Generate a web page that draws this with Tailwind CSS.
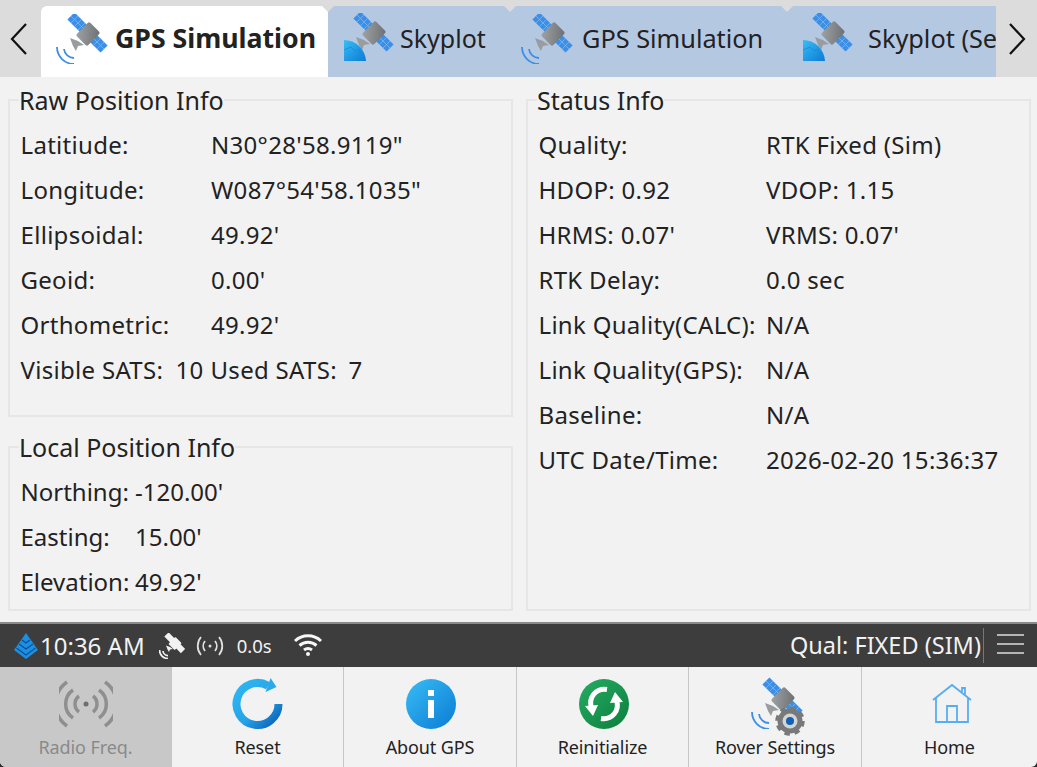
<!DOCTYPE html>
<html lang="en">
<head>
<meta charset="UTF-8">
<title>GPS Simulation</title>
<script src="https://cdn.jsdelivr.net/npm/@tailwindcss/browser@4"></script>
</head>
<body class="w-[1037px] h-[767px] overflow-hidden bg-[#2a2a2a] text-[#222] font-['Noto_Sans',sans-serif]">
<svg class="absolute w-0 h-0">
  <defs>
    <linearGradient id="blueGrad" x1="0" y1="0" x2="1" y2="1"><stop offset="0" stop-color="#38bdf5"/><stop offset="1" stop-color="#0b7bd4"/></linearGradient>
    <linearGradient id="greenGrad" x1="0" y1="0" x2="1" y2="1"><stop offset="0" stop-color="#25ac62"/><stop offset="1" stop-color="#0c7f3e"/></linearGradient>
    <linearGradient id="resetGrad" x1="0" y1="0" x2="1" y2="1"><stop offset="0" stop-color="#2fb8f2"/><stop offset=".55" stop-color="#25a3e8"/><stop offset="1" stop-color="#0a5fb8"/></linearGradient>
    <linearGradient id="bodyGrad" x1="0" y1="0" x2="1" y2="1"><stop offset="0" stop-color="#a0a3a5"/><stop offset="1" stop-color="#6c7073"/></linearGradient>
    <symbol id="sat" viewBox="0 0 52 50" overflow="visible">
      <g transform="rotate(45 22 9)"><rect x="12" y="4" width="20" height="10" fill="#3c8fe6"/><path d="M17 4v10M22 4v10M27 4v10M12 9h20" stroke="#86b9ee" stroke-width=".7"/></g>
      <g transform="rotate(45 41 28)"><rect x="31" y="23" width="20" height="10" fill="#3c8fe6"/><path d="M36 23v10M41 23v10M46 23v10M31 28h20" stroke="#86b9ee" stroke-width=".7"/></g>
      <rect x="22.500" y="12" width="19" height="16" rx="2" transform="rotate(-45 32 20)" fill="url(#bodyGrad)"/>
      <path d="M14 24l8 3 6 4-6 1-2 5-3-5z" fill="#9a9d9f"/>
    </symbol>
    <symbol id="waves" viewBox="0 0 52 50">
      <path d="M1 33a17 17 0 0 0 17 17M8 35a10 10 0 0 0 10 9" fill="none" stroke="#3c8fe6" stroke-width="1.800"/>
    </symbol>
    <symbol id="cone" viewBox="0 0 52 50">
      <path d="M2 27a22 22 0 0 1 22 21H2z" fill="url(#blueGrad)"/>
      <path d="M2 37l7-3 4 4 4-2 4 12" fill="none" stroke="#1a86dc" stroke-width=".8"/>
    </symbol>
  </defs>
</svg>

<div class="w-full h-full bg-[#f2f2f2] rounded-b-[6px] overflow-hidden">
<!-- tab strip -->
<div class="h-[77px] bg-[#dcdcdc] pt-[6px] flex">
  <button class="w-[41px] h-full flex items-center justify-center">
    <svg width="20" height="34" viewBox="0 0 20 34" class="-mt-[5px] ml-[-4px]"><path d="M17 2 3 17l14 15" fill="none" stroke="#111" stroke-width="2.200"/></svg>
  </button>
  <div class="w-[955px] flex overflow-hidden">
    <div class="w-[287px] shrink-0 bg-white rounded-t-[6px] flex items-center pl-[15px] relative z-10">
      <svg width="52" height="50" class="shrink-0 mt-[-5px]"><use href="#sat"/><use href="#waves"/></svg>
      <span class="ml-[7px] mt-[-6px] text-[26.700px] font-bold whitespace-nowrap">GPS Simulation</span>
      <span class="absolute top-0 right-[-6px] w-[12px] h-[6px] bg-[#dcdcdc] [clip-path:polygon(0_0,100%_0,50%_100%)]"></span>
    </div>
    <div class="w-[182px] shrink-0 bg-[#b5c8e2] flex items-center pl-[14px] relative">
      <svg width="52" height="50" class="shrink-0 mt-[-7px]"><use href="#sat"/><use href="#cone"/></svg>
      <span class="ml-[6px] mt-[-6px] text-[25px] whitespace-nowrap">Skyplot</span>
    </div>
    <div class="w-[277px] shrink-0 bg-[#b5c8e2] flex items-center pl-[11px] relative z-10">
      <span class="absolute top-0 left-[-6px] w-[12px] h-[6px] bg-[#dcdcdc] [clip-path:polygon(0_0,100%_0,50%_100%)]"></span>
      <span class="absolute top-0 right-[-6px] w-[12px] h-[6px] bg-[#dcdcdc] [clip-path:polygon(0_0,100%_0,50%_100%)]"></span>
      <svg width="52" height="50" class="shrink-0 mt-[-5px]"><use href="#sat"/><use href="#waves"/></svg>
      <span class="ml-[9px] mt-[-6px] text-[25.300px] whitespace-nowrap">GPS Simulation</span>
    </div>
    <div class="w-[209px] shrink-0 bg-[#b5c8e2] flex items-center pl-[14px] relative overflow-hidden">
      <svg width="52" height="50" class="shrink-0 mt-[-7px]"><use href="#sat"/><use href="#cone"/></svg>
      <span class="ml-[15px] mt-[-6px] text-[25.300px] whitespace-nowrap">Skyplot (Sec)</span>
    </div>
  </div>
  <button class="w-[41px] h-full flex items-center justify-center">
    <svg width="20" height="34" viewBox="0 0 20 34" class="-mt-[5px]"><path d="M3 2l14 15L3 32" fill="none" stroke="#111" stroke-width="2.200"/></svg>
  </button>
</div>

<!-- info panels -->
<div class="h-[545px] flex gap-[13px] pl-[8px] pr-[6px]">
  <div class="w-[505px] flex flex-col">
    <fieldset class="h-[332px] mt-[8px] border-2 border-[#e6e6e6] px-[10.500px]">
      <legend class="ml-[-1.500px] text-[25px] leading-[30px]">Raw Position Info</legend>
      <div class="grid grid-cols-[190.500px_1fr] auto-rows-[45px] items-center text-[24px] tracking-[0.3px] mt-[7px]">
        <span>Latitiude:</span><span>N30°28'58.9119"</span>
        <span>Longitude:</span><span>W087°54'58.1035"</span>
        <span>Ellipsoidal:</span><span>49.92'</span>
        <span>Geoid:</span><span>0.00'</span>
        <span>Orthometric:</span><span>49.92'</span>
        <div class="col-span-2 flex whitespace-nowrap">
          <span class="w-[155px]">Visible SATS:</span><span class="w-[35px]">10</span><span class="w-[138px]">Used SATS:</span><span>7</span>
        </div>
      </div>
    </fieldset>
    <fieldset class="h-[179px] mt-[15px] border-2 border-[#e6e6e6] px-[10.500px]">
      <legend class="ml-[-1.500px] text-[25px] leading-[30px]">Local Position Info</legend>
      <div class="grid grid-cols-[114.500px_1fr] auto-rows-[45px] items-center text-[24px] mt-[7px]">
        <span>Northing:</span><span>-120.00'</span>
        <span>Easting:</span><span>15.00'</span>
        <span>Elevation:</span><span>49.92'</span>
      </div>
    </fieldset>
  </div>
  <fieldset class="w-[505px] h-[526px] mt-[8px] border-2 border-[#e6e6e6] px-[10.500px]">
    <legend class="ml-[-1.500px] text-[25px] leading-[30px]">Status Info</legend>
    <div class="grid grid-cols-[227.500px_1fr] auto-rows-[45px] items-center text-[24px] tracking-[0.3px] mt-[7px]">
      <span>Quality:</span><span>RTK Fixed (Sim)</span>
      <span>HDOP: 0.92</span><span>VDOP: 1.15</span>
      <span>HRMS: 0.07'</span><span>VRMS: 0.07'</span>
      <span>RTK Delay:</span><span>0.0 sec</span>
      <span>Link Quality(CALC):</span><span>N/A</span>
      <span>Link Quality(GPS):</span><span>N/A</span>
      <span>Baseline:</span><span>N/A</span>
      <span>UTC Date/Time:</span><span>2026-02-20 15:36:37</span>
    </div>
  </fieldset>
</div>

<!-- status bar -->
<div class="h-[45px] bg-[#3d3d3d] border-t-2 border-[#8a8a8a] flex items-center text-[#f2f2f2]">
  <svg width="24" height="28" viewBox="0 0 24 28" class="ml-[14px] shrink-0 mt-[2px]">
    <path d="M12 0 0 17l12 9 12-9z" fill="#1c8fe0"/>
    <path d="M8 7l4 3 4-3M5 11l7 5 7-5M2.500 15l9.500 7 9.500-7" stroke="#0a4f96" stroke-width="1.100" fill="none"/>
  </svg>
  <span class="ml-[2px] text-[24px] whitespace-nowrap">10:36 AM</span>
  <svg width="26" height="26" viewBox="0 0 52 50" class="ml-[14px] shrink-0">
    <g fill="#f2f2f2"><rect x="12" y="3" width="20" height="12" transform="rotate(45 22 9)"/><rect x="22" y="11" width="20" height="18" rx="2" transform="rotate(-45 32 20)"/><rect x="31" y="22" width="20" height="12" transform="rotate(45 41 28)"/><path d="M14 24l8 3 6 4-6 1-2 5-3-5z"/></g>
    <path d="M1 33a17 17 0 0 0 17 17M8 35a10 10 0 0 0 10 9" fill="none" stroke="#f2f2f2" stroke-width="3.500"/>
  </svg>
  <svg width="28" height="22" viewBox="0 0 28 22" class="ml-[11px] shrink-0" fill="none" stroke="#e0e0e0" stroke-width="1.800"><circle cx="14" cy="11" r="1.500" fill="#e0e0e0" stroke="none"/><path d="M9 6a8 8 0 0 0 0 10M19 6a8 8 0 0 1 0 10M5 2a14 14 0 0 0 0 18M23 2a14 14 0 0 1 0 18"/></svg>
  <span class="ml-[13px] text-[18.500px] whitespace-nowrap">0.0s</span>
  <svg width="30" height="24" viewBox="0 0 30 24" class="ml-[21px] shrink-0 -mt-[3px]" fill="none" stroke="#f7f7f7" stroke-width="3"><path d="M2 9a19 19 0 0 1 26 0M6.500 13.500a13 13 0 0 1 17 0M11 18a6.500 6.500 0 0 1 8 0"/><circle cx="15" cy="22" r="2" fill="#f7f7f7" stroke="none"/></svg>
  <span class="ml-auto text-[23.500px] whitespace-nowrap">Qual: FIXED (SIM)</span>
  <div class="ml-[2px] w-px h-[35px] bg-[#777]"></div>
  <div class="w-[53px] flex flex-col gap-[7px] items-center -mt-[4px]">
    <div class="w-[27px] h-[2px] bg-[#b5b5b5]"></div>
    <div class="w-[27px] h-[2px] bg-[#b5b5b5]"></div>
    <div class="w-[27px] h-[2px] bg-[#b5b5b5]"></div>
  </div>
</div>

<!-- bottom buttons -->
<div class="h-[100px] grid grid-cols-[171px_172px_173px_172px_173px_1fr] text-[18px] tracking-[-0.1px]">
  <button class="bg-[#c8c8c8] text-[#8a8a8a] flex flex-col items-center pt-[12px]">
    <svg width="54" height="50" viewBox="0 0 54 50" fill="none" stroke="#8f8f8f" stroke-width="3.500"><circle cx="27" cy="25" r="2.500" fill="#6f6f6f" stroke="none"/><path d="M20 17a10 10 0 0 0 0 16M34 17a10 10 0 0 1 0 16M14 11a17 17 0 0 0 0 28M40 11a17 17 0 0 1 0 28M8 3a27 27 0 0 0 0 44M46 3a27 27 0 0 1 0 44"/></svg>
    <span class="mt-[5px]">Radio Freq.</span>
  </button>
  <button class="border-l border-[#c6c6c6] flex flex-col items-center pt-[12px]">
    <svg width="52" height="50" viewBox="0 0 52 50" class="overflow-visible ml-[1px]"><path d="M46.500 25a21 21 0 1 1-10.500-18.200" fill="none" stroke="url(#resetGrad)" stroke-width="8"/><path d="M38.600-1 44.500 8l-11 5z" fill="#2aa9ec"/></svg>
    <span class="mt-[5px]">Reset</span>
  </button>
  <button class="border-l border-[#c6c6c6] flex flex-col items-center pt-[12px]">
    <svg width="50" height="50" viewBox="0 0 50 50" class="ml-[2px]"><circle cx="25" cy="25" r="25" fill="url(#blueGrad)"/><rect x="22" y="21" width="6" height="18" fill="#fff"/><rect x="22" y="11" width="6" height="6" fill="#fff"/></svg>
    <span class="mt-[5px]">About GPS</span>
  </button>
  <button class="border-l border-[#c6c6c6] flex flex-col items-center pt-[12px]">
    <svg width="50" height="50" viewBox="0 0 50 50" class="ml-[2px]"><circle cx="25" cy="25" r="25" fill="url(#greenGrad)"/>
      <g><path d="M28 10.500C17 9 9 18 12.500 29" fill="none" stroke="#fff" stroke-width="5"/><path d="M6 27l13-1-5 11z" fill="#fff"/></g>
      <g transform="rotate(180 25 25)"><path d="M28 10.500C17 9 9 18 12.500 29" fill="none" stroke="#fff" stroke-width="5"/><path d="M6 27l13-1-5 11z" fill="#fff"/></g>
    </svg>
    <span class="mt-[5px]">Reinitialize</span>
  </button>
  <button class="border-l border-[#c6c6c6] flex flex-col items-center pt-[12px]">
    <svg width="52" height="50" viewBox="0 0 52 50" class="ml-[4px] overflow-visible">
      <use href="#sat"/><use href="#waves"/>
      <circle cx="39" cy="42" r="9.500" fill="none" stroke="#77797b" stroke-width="6"/><circle cx="39" cy="42" r="13" fill="none" stroke="#77797b" stroke-width="3.500" stroke-dasharray="5.500 4.700"/><circle cx="39" cy="42" r="7.500" fill="#d4d4d4"/><circle cx="39" cy="42" r="4" fill="#0f62b5"/>
    </svg>
    <span class="mt-[5px]">Rover Settings</span>
  </button>
  <button class="border-l border-[#c6c6c6] flex flex-col items-center pt-[12px]">
    <svg width="50" height="50" viewBox="0 0 50 50" class="ml-[5px]" fill="none" stroke="#55aef2" stroke-width="1.800"><path d="M6 21 25 6l19 15M9 19v24h32V19M20 43V27h10v16M35 13V9h3v6.500"/></svg>
    <span class="mt-[5px]">Home</span>
  </button>
</div>
</div>
</body>
</html>
